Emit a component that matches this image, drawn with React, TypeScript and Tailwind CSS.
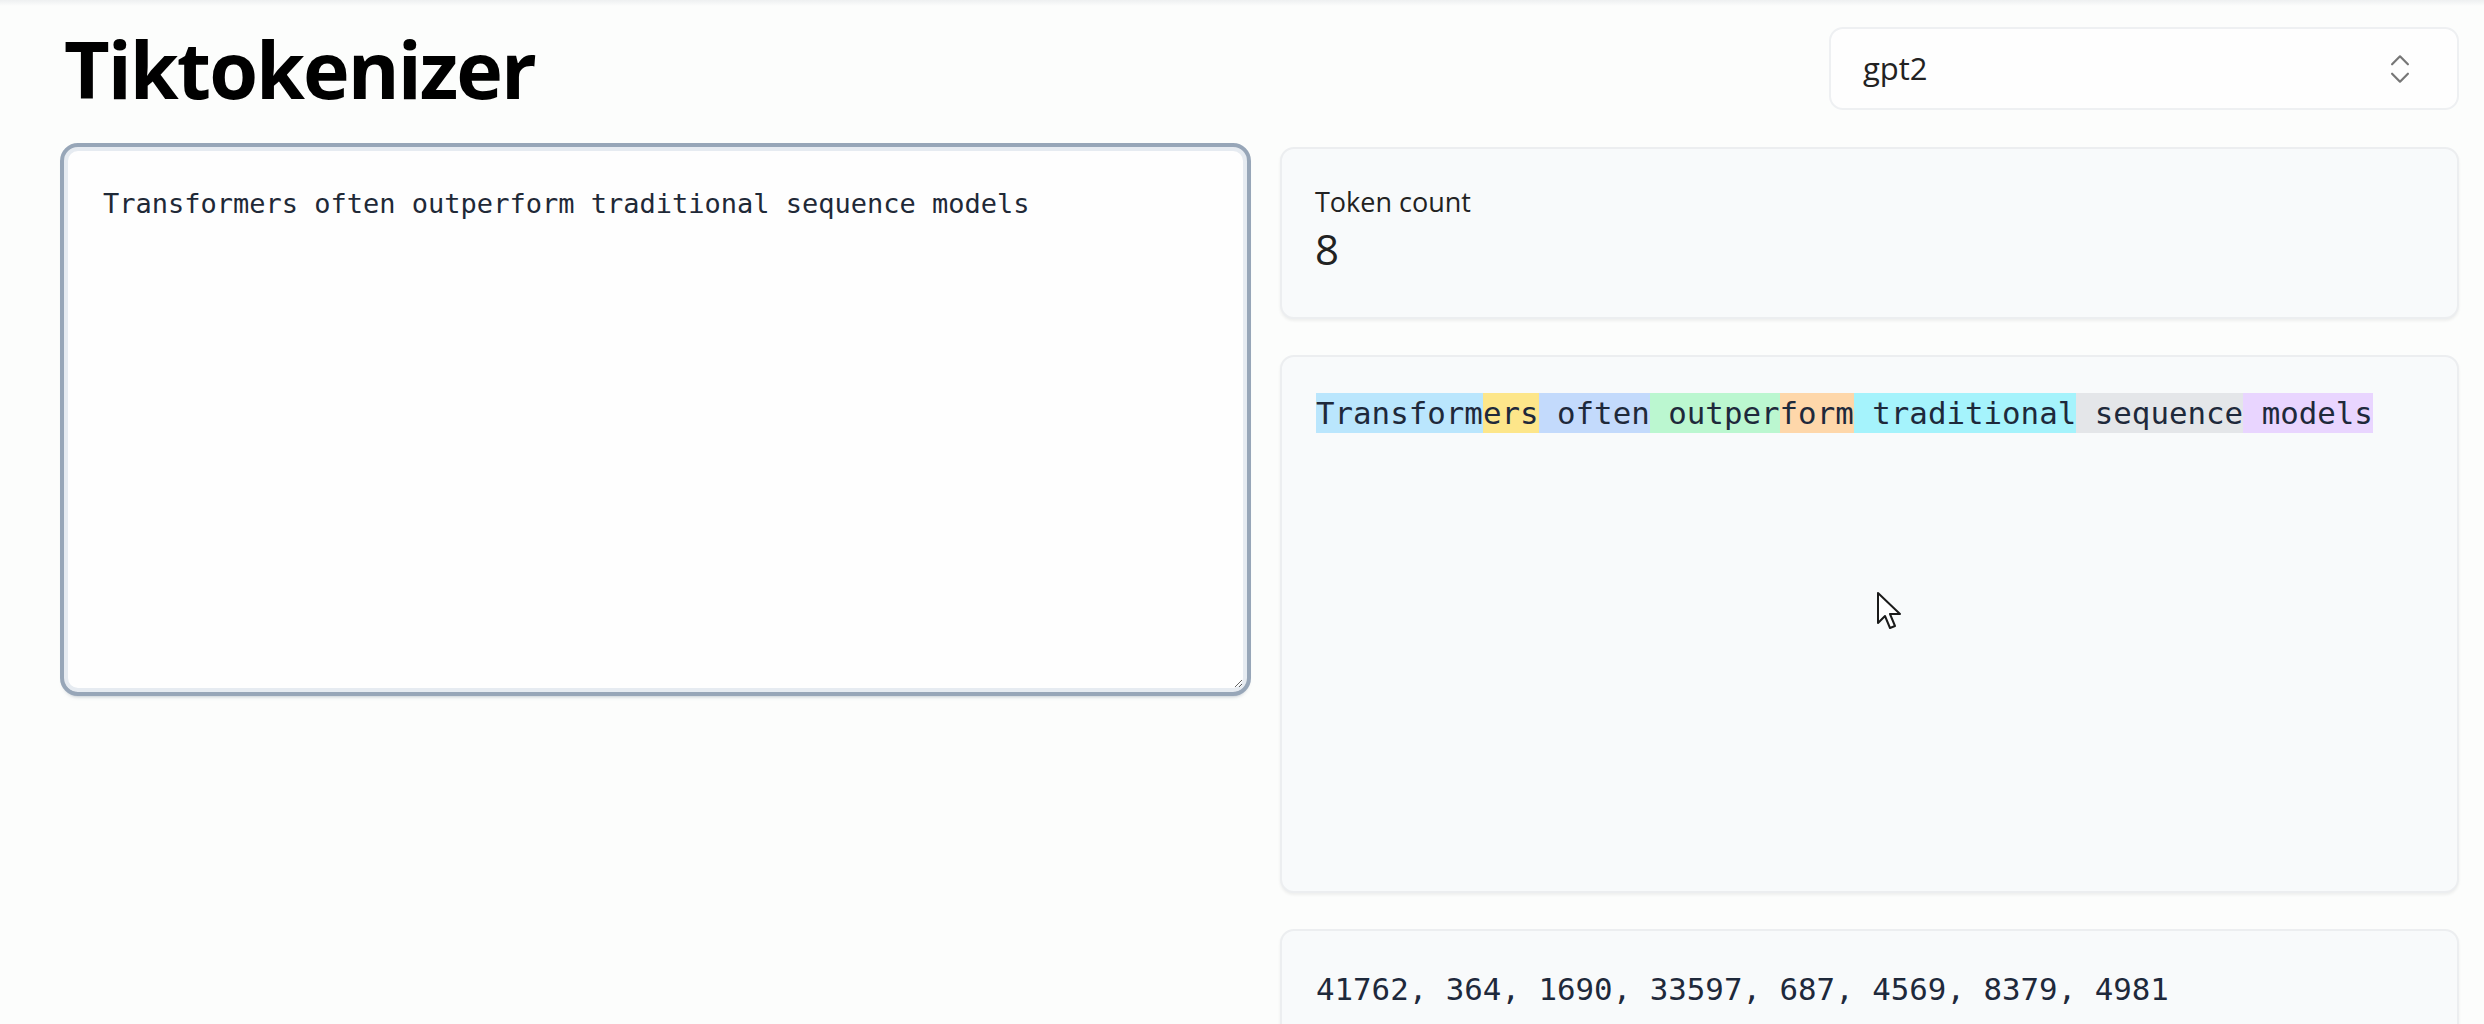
import React from 'react';
import { ChevronsUpDown } from 'lucide-react';

// Token pieces with their highlight colour, in order
const tokens: { text: string; bg: string }[] = [
  { text: 'Transform', bg: 'bg-[#bae6fd]' },
  { text: 'ers', bg: 'bg-[#fde68a]' },
  { text: ' often', bg: 'bg-[#c3dafc]' },
  { text: ' outper', bg: 'bg-[#bbf7d0]' },
  { text: 'form', bg: 'bg-[#fed7aa]' },
  { text: ' traditional', bg: 'bg-[#a5f3fc]' },
  { text: ' sequence', bg: 'bg-[#e4e6e9]' },
  { text: ' models', bg: 'bg-[#e9d5ff]' },
];

const ids = [41762, 364, 1690, 33597, 687, 4569, 8379, 4981];

const sans = "font-['Open_Sans','Noto_Sans',sans-serif]";
const mono = "font-['DejaVu_Sans_Mono','Liberation_Mono',monospace]";

function Cursor() {
  return (
    <svg
      className="absolute left-[1876px] top-[591px] pointer-events-none"
      width="28"
      height="42"
      viewBox="0 0 14 21"
    >
      <path
        d="M1 1 L1 16 L4.5 12.5 L7 18.5 L9.5 17.5 L7 11.5 L12 11.5 Z"
        fill="#ffffff"
        stroke="#1a1a1a"
        strokeWidth="1"
        strokeLinejoin="round"
      />
    </svg>
  );
}

export default function App() {
  const text = tokens.map((t) => t.text).join('');

  return (
    <div className={`relative min-h-screen overflow-hidden bg-[#fcfdfc] ${sans}`}>
      <div className="h-[6px] bg-gradient-to-b from-[#eef0f1] to-[#fcfdfc]" />

      <main className="pl-[64px] pr-[25px] pt-[21px]">
        {/* Title + encoder picker */}
        <div className="flex items-center justify-between">
          <h1 className="text-[79px] font-bold leading-none tracking-[-2px] text-black">Tiktokenizer</h1>
          <div className="flex h-[83px] w-[630px] items-center justify-between rounded-[14px] border-2 border-[#eef0f2] bg-[#fefefe] pl-[32px] pr-[38px]">
            <span className="text-[31px] text-[#222]">gpt2</span>
            <ChevronsUpDown size={38} strokeWidth={1.4} className="text-[#777]" />
          </div>
        </div>

        <div className="mt-[37px] grid grid-cols-[1fr_1179px] items-start gap-[33px]">
          {/* Input */}
          <textarea
            readOnly
            value={text}
            className={`h-[545px] w-full resize-y rounded-[14px] border-4 border-[#e6ebf1] bg-[#fefefe] px-[35px] pt-[33px] text-[27px] leading-normal text-[#1f2937] outline-4 outline-[#97a6b8] shadow-[0_4px_4px_rgba(100,116,139,0.55)] ${mono}`}
          />

          {/* Output */}
          <div className="flex flex-col gap-[36px]">
            <div className="h-[172px] rounded-[14px] border-2 border-[#eceef0] bg-[#f8fafb] px-[33px] pt-[36px] shadow-[0_2px_3px_rgba(0,0,0,0.06)]">
              <div className="text-[27px] leading-[34px] text-[#222]">Token count</div>
              <div className="mt-[6px] text-[42px] leading-[48px] text-[#222]">{tokens.length}</div>
            </div>

            <div className="h-[538px] rounded-[14px] border-2 border-[#eceef0] bg-[#f8fafb] px-[34px] pt-[36px] shadow-[0_2px_3px_rgba(0,0,0,0.06)]">
              <div className={`flex flex-wrap text-[30.8px] text-[#1e293b] ${mono}`}>
                {tokens.map((t, i) => (
                  <span key={i} className={`h-[40px] whitespace-pre leading-[40px] ${t.bg}`}>
                    {t.text}
                  </span>
                ))}
              </div>
            </div>

            <div className="h-[200px] rounded-[14px] border-2 border-[#eceef0] bg-[#f8fafb] px-[34px] pt-[38px] shadow-[0_2px_3px_rgba(0,0,0,0.06)]">
              <div className={`text-[30.8px] leading-[40px] text-[#1e293b] ${mono}`}>{ids.join(', ')}</div>
            </div>
          </div>
        </div>
      </main>

      <Cursor />
    </div>
  );
}
